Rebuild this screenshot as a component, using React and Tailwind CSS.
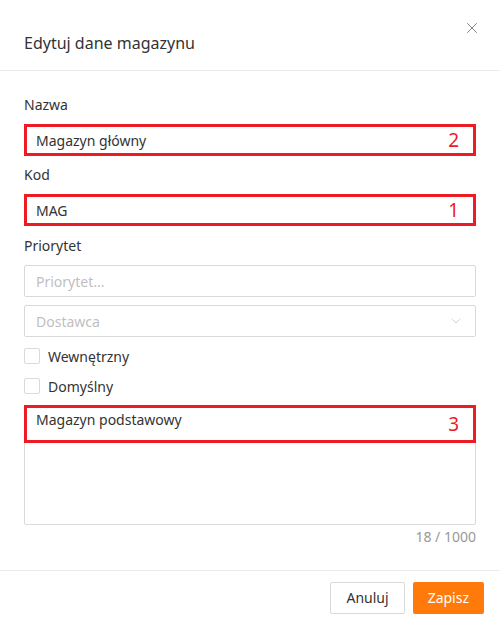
import { X, ChevronDown } from 'lucide-react';

const font = { fontFamily: '"Noto Sans", "Open Sans", sans-serif' };

// red annotation frame laid over a field
const Mark = ({ n, className = '' }) => (
  <div className={`pointer-events-none absolute border-[3px] border-[#ed1c24] ${className}`}>
    <span className="absolute right-[14px] top-1/2 -translate-y-1/2 text-[19px] leading-none text-[#ed1c24]">{n}</span>
  </div>
);

const Field = ({ label, children }) => (
  <div className="flex flex-col">
    <label className="h-[22px] text-[14px] leading-[22px] text-[#333]">{label}</label>
    <div className="mt-[8px]">{children}</div>
  </div>
);

const TextInput = ({ value, placeholder, mark }) => (
  <div className="relative h-[32px] border border-[#d9d9d9] rounded-[2px] px-[11px] flex items-center text-[14px]">
    {value ? <span className="text-[#333]">{value}</span> : <span className="text-[#bfbfbf]">{placeholder}</span>}
    {mark && <Mark n={mark} className="-inset-px" />}
  </div>
);

const Check = ({ label }) => (
  <div className="h-[30px] flex items-center gap-[8px]">
    <span className="w-[16px] h-[16px] border border-[#d9d9d9] rounded-[2px] bg-white" />
    <span className="text-[14px] text-[#333]">{label}</span>
  </div>
);

export default function App() {
  return (
    <div className="w-[500px] h-[624px] bg-white flex flex-col" style={font}>
      {/* Header */}
      <div className="relative h-[71px] border-b border-[#ebebeb] px-[24px] flex items-end pb-[16px]">
        <h2 className="text-[16px] leading-[22px] text-[#333]">Edytuj dane magazynu</h2>
        <button className="absolute right-[19px] top-[19px] text-[#7f7f7f]">
          <X size={18} strokeWidth={1.3} />
        </button>
      </div>

      {/* Body */}
      <div className="flex-1 px-[24px] pt-[23px] flex flex-col">
        <Field label="Nazwa">
          <TextInput value="Magazyn główny" mark="2" />
        </Field>
        <div className="mt-[8px]">
          <Field label="Kod">
            <TextInput value="MAG" mark="1" />
          </Field>
        </div>
        <div className="mt-[9px]">
          <Field label="Priorytet">
            <TextInput placeholder="Priorytet..." />
          </Field>
        </div>
        <div className="mt-[8px] relative h-[32px] border border-[#d9d9d9] rounded-[2px] px-[11px] flex items-center justify-between text-[14px]">
          <span className="text-[#bfbfbf]">Dostawca</span>
          <ChevronDown size={16} strokeWidth={1} className="text-[#bfbfbf]" />
        </div>
        <div className="mt-[4px] flex flex-col">
          <Check label="Wewnętrzny" />
          <Check label="Domyślny" />
        </div>
        <div className="mt-[4px] relative h-[120px] border border-[#d9d9d9] rounded-[2px] px-[11px] pt-[3px] text-[14px] leading-[22px] text-[#333]">
          Magazyn podstawowy
          <Mark n="3" className="-left-px -right-px -top-px h-[38px]" />
        </div>
        <div className="mt-[1px] text-right text-[14px] leading-[22px] text-[#999]">18 / 1000</div>
      </div>

      {/* Footer */}
      <div className="h-[54px] border-t border-[#ebebeb] px-[16px] flex items-center justify-end gap-[8px]">
        <button className="h-[32px] px-[15px] border border-[#d9d9d9] rounded-[2px] text-[14px] text-[#333] bg-white">Anuluj</button>
        <button className="h-[32px] px-[15px] rounded-[2px] text-[14px] text-white bg-[#ff7a0a]">Zapisz</button>
      </div>
    </div>
  );
}
